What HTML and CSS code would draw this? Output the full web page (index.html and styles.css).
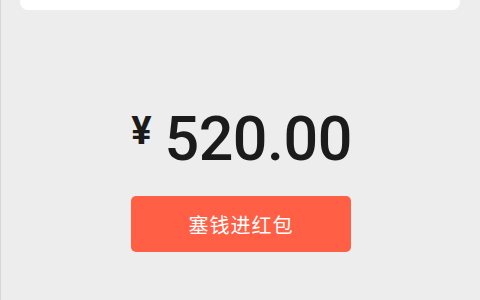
FILE: index.html
```html
<!DOCTYPE html>
<html lang="zh">
<head>
<meta charset="utf-8">
<link rel="stylesheet" href="styles.css">
</head>
<body>
<div class="page">
  <div class="card"></div>
  <div class="amount"><span class="yen">¥</span><span class="num">520.00</span></div>
  <button class="btn">塞钱进红包</button>
</div>
</body>
</html>
```
FILE: styles.css
```css
html, body {
  margin: 0;
  padding: 0;
  background: #ededed;
}
.page {
  width: 480px;
  height: 300px;
  box-sizing: border-box;
  border-left: 1px solid #d6d6d6;
  display: flex;
  flex-direction: column;
  align-items: center;
  overflow: hidden;
}
.card {
  width: 440px;
  height: 10px;
  margin-left: -1px;
  background: #ffffff;
  border-radius: 0 0 8px 8px;
  flex: none;
}
.amount {
  margin-top: 99px;
  display: flex;
  align-items: baseline;
  color: #1b1b1b;
  font-family: Roboto, "Noto Sans", sans-serif;
  line-height: 1;
  margin-left: 2px;
}
.yen {
  font-size: 38px;
  font-weight: 700;
  margin-right: 13px;
  position: relative;
  top: -16px;
}
.num {
  font-size: 61px;
  font-weight: 500;
  letter-spacing: -0.5px;
}
.btn {
  margin-top: 26px;
  width: 220px;
  height: 56px;
  border: none;
  border-radius: 5px;
  background: #fe5f45;
  color: #ffffff;
  font-family: "Noto Sans CJK SC", sans-serif;
  font-size: 20px;
  letter-spacing: 1px;
  margin-left: 1px;
  padding: 0;
}
```
